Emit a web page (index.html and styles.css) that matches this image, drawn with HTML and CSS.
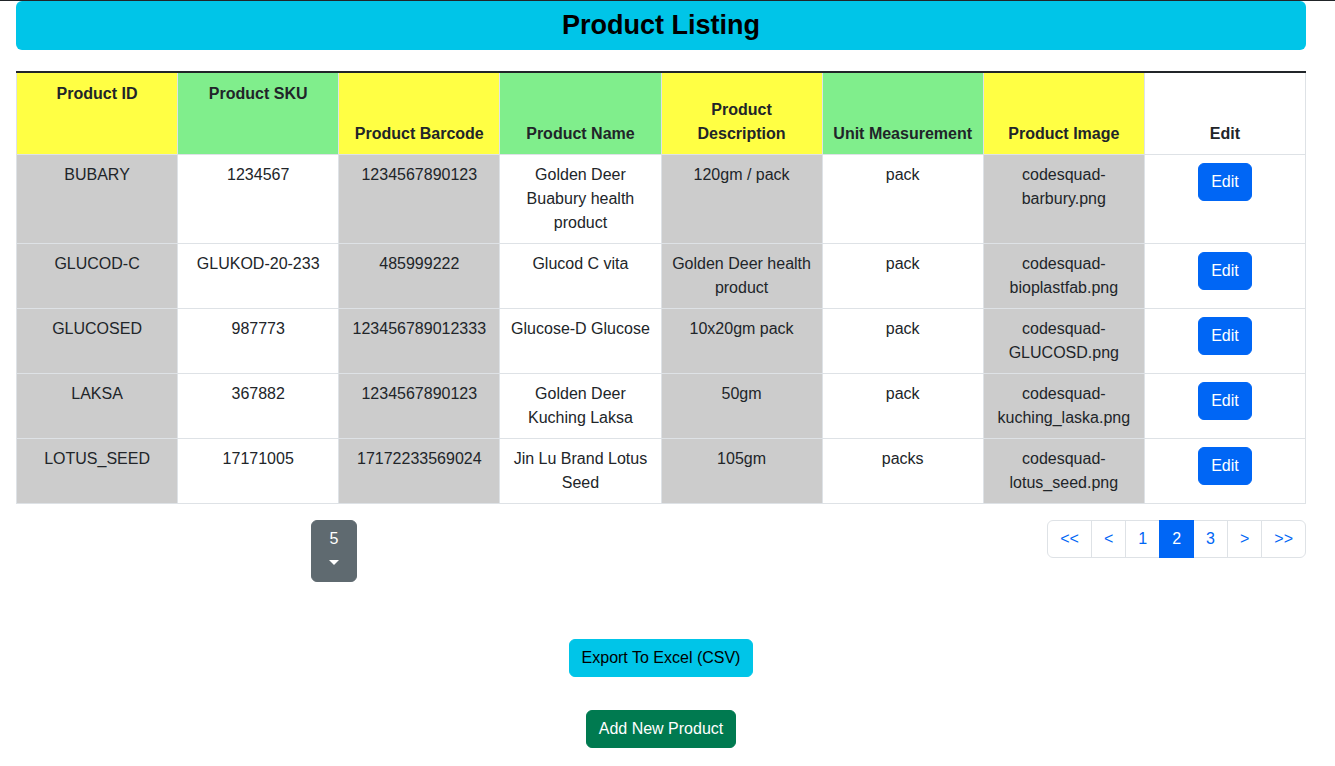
FILE: index.html
```html
<!DOCTYPE html>
<html lang="en">
<head>
<meta charset="utf-8">
<title>Product Listing</title>
<link rel="stylesheet" href="styles.css">
</head>
<body>
<div class="topline"></div>
<main class="page">
  <h1 class="title">Product Listing</h1>
  <table class="products">
    <colgroup>
      <col class="c-gray"><col class="c-white"><col class="c-gray"><col class="c-white">
      <col class="c-gray"><col class="c-white"><col class="c-gray"><col class="c-white">
    </colgroup>
    <thead>
      <tr>
        <th class="h-yellow v-top">Product ID</th>
        <th class="h-green v-top">Product SKU</th>
        <th class="h-yellow">Product Barcode</th>
        <th class="h-green">Product Name</th>
        <th class="h-yellow">Product Description</th>
        <th class="h-green">Unit Measurement</th>
        <th class="h-yellow">Product Image</th>
        <th class="h-white">Edit</th>
      </tr>
    </thead>
    <tbody>
      <tr>
        <td class="gray">BUBARY</td><td>1234567</td><td class="gray">1234567890123</td>
        <td>Golden Deer Buabury health product</td><td class="gray">120gm / pack</td><td>pack</td>
        <td class="gray">codesquad-barbury.png</td><td><button class="btn btn-edit">Edit</button></td>
      </tr>
      <tr>
        <td class="gray">GLUCOD-C</td><td>GLUKOD-20-233</td><td class="gray">485999222</td>
        <td>Glucod C vita</td><td class="gray">Golden Deer health product</td><td>pack</td>
        <td class="gray">codesquad-bioplastfab.png</td><td><button class="btn btn-edit">Edit</button></td>
      </tr>
      <tr>
        <td class="gray">GLUCOSED</td><td>987773</td><td class="gray">123456789012333</td>
        <td>Glucose-D Glucose</td><td class="gray">10x20gm pack</td><td>pack</td>
        <td class="gray">codesquad-GLUCOSD.png</td><td><button class="btn btn-edit">Edit</button></td>
      </tr>
      <tr>
        <td class="gray">LAKSA</td><td>367882</td><td class="gray">1234567890123</td>
        <td>Golden Deer Kuching Laksa</td><td class="gray">50gm</td><td>pack</td>
        <td class="gray">codesquad-kuching_laska.png</td><td><button class="btn btn-edit">Edit</button></td>
      </tr>
      <tr>
        <td class="gray">LOTUS_SEED</td><td>17171005</td><td class="gray">17172233569024</td>
        <td>Jin Lu Brand Lotus Seed</td><td class="gray">105gm</td><td>packs</td>
        <td class="gray">codesquad-lotus_seed.png</td><td><button class="btn btn-edit">Edit</button></td>
      </tr>
    </tbody>
  </table>

  <div class="controls">
    <div class="size-wrap">
      <button class="btn btn-size"><span class="size-num">5</span><span class="caret"></span></button>
    </div>
    <nav class="pager">
      <a class="pg">&lt;&lt;</a><a class="pg">&lt;</a><a class="pg">1</a><a class="pg active">2</a><a class="pg">3</a><a class="pg">&gt;</a><a class="pg">&gt;&gt;</a>
    </nav>
  </div>

  <div class="actions">
    <button class="btn btn-export">Export To Excel (CSV)</button>
    <button class="btn btn-add">Add New Product</button>
  </div>
</main>
</body>
</html>
```

FILE: styles.css
```css
* { box-sizing: border-box; }
html, body { margin: 0; padding: 0; background: #fff; }
body {
  font-family: "Liberation Sans", Arial, Helvetica, sans-serif;
  font-size: 16px;
  line-height: 24px;
  color: #212529;
}
.topline { height: 1px; background: #212529; }
.page { width: 1290px; margin-left: 16px; }
.title {
  margin: 0;
  background: #00c5e8;
  border-radius: 6px;
  text-align: center;
  font-size: 27px;
  line-height: 33px;
  font-weight: 700;
  color: #000;
  padding: 8px 0;
  height: 49px;
}
.products {
  margin-top: 21px;
  width: 1290px;
  table-layout: fixed;
  border-collapse: collapse;
  border-top: 2px solid #212529;
}
.products th, .products td {
  border: 1px solid #dee2e6;
  padding: 8px;
  text-align: center;
}
.products thead tr:first-child th { border-top: 2px solid #212529; }
.products th {
  font-weight: 700;
  vertical-align: bottom;
  height: 82px;
}
.products th.v-top { vertical-align: top; padding-top: 9px; }
.products td { vertical-align: top; }
.h-yellow { background: #ffff44; }
.h-green { background: #80ee8c; }
.h-white { background: #fff; }
.gray { background: #cccccc; }

.btn {
  font-family: inherit;
  font-size: 16px;
  line-height: 24px;
  border: 1px solid transparent;
  border-radius: 6px;
  padding: 6px 12px;
  cursor: pointer;
}
.btn-edit { background: #0066f5; color: #fff; border-color: #0066f5; }

.controls {
  display: flex;
  justify-content: space-between;
  align-items: flex-start;
  margin-top: 16px;
}
.size-wrap { width: 636px; display: flex; justify-content: center; }
.btn-size {
  width: 46px;
  height: 62px;
  background: #5f6a70;
  border-color: #5f6a70;
  color: #fff;
  display: flex;
  flex-direction: column;
  align-items: center;
  padding: 6px 12px;
}
.size-num { display: block; height: 24px; }
.caret {
  display: block;
  margin-top: 9px;
  width: 0; height: 0;
  border-top: 5px solid #fff;
  border-left: 5px solid transparent;
  border-right: 5px solid transparent;
}
.pager { display: flex; }
.pg {
  display: block;
  height: 38px;
  padding: 6px 12px;
  border: 1px solid #dee2e6;
  margin-left: -1px;
  color: #0066f5;
  background: #fff;
  font-size: 16px;
  line-height: 24px;
  text-decoration: none;
}
.pg:first-child { border-radius: 6px 0 0 6px; margin-left: 0; }
.pg:last-child { border-radius: 0 6px 6px 0; }
.pg.active { background: #0066f5; border-color: #0066f5; color: #fff; position: relative; }

.actions {
  display: flex;
  flex-direction: column;
  align-items: center;
  margin-top: 57px;
  gap: 33px;
}
.btn-export { background: #00c5e8; border-color: #00c5e8; color: #000; }
.btn-add { background: #007a50; border-color: #007a50; color: #fff; }
```
